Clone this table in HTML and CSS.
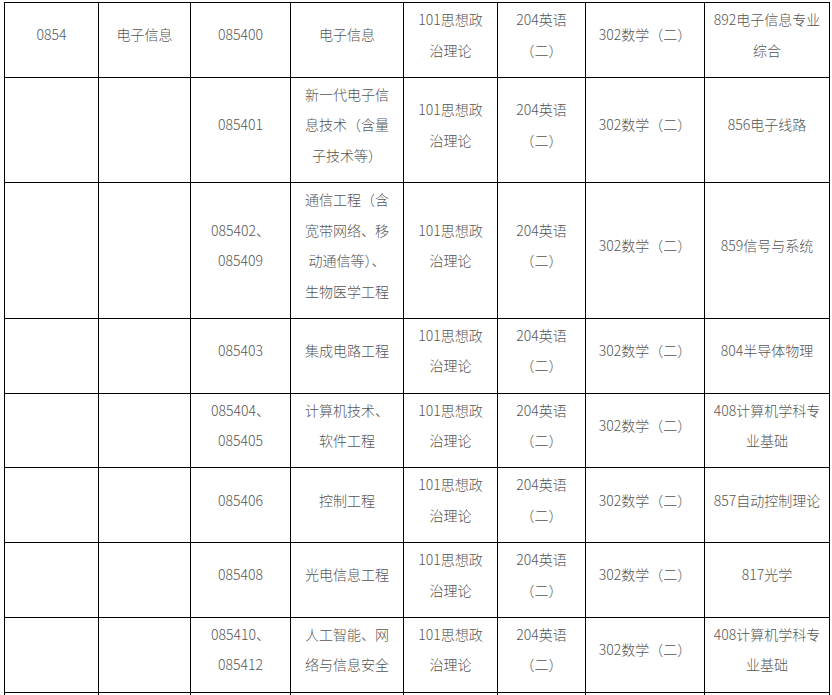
FILE: index.html
```html
<!DOCTYPE html>
<html lang="zh-CN">
<head>
<meta charset="utf-8">
<title>电子信息</title>
<link rel="stylesheet" href="styles.css">
</head>
<body>
<table class="grid">
  <colgroup>
    <col class="c1"><col class="c2"><col class="c3"><col class="c4"><col class="c5"><col class="c6"><col class="c7"><col class="c8">
  </colgroup>
  <tbody>
    <tr>
      <td>0854</td><td>电子信息</td><td>085400</td><td>电子信息</td>
      <td>101思想政<br>治理论</td><td>204英语<br>（二）</td><td>302数学（二）</td><td>892电子信息专业<br>综合</td>
    </tr>
    <tr>
      <td></td><td></td><td>085401</td><td>新一代电子信<br>息技术（含量<br>子技术等）</td>
      <td>101思想政<br>治理论</td><td>204英语<br>（二）</td><td>302数学（二）</td><td>856电子线路</td>
    </tr>
    <tr>
      <td></td><td></td><td>085402、<br>085409</td><td>通信工程（含<br>宽带网络、移<br>动通信等）、<br>生物医学工程</td>
      <td>101思想政<br>治理论</td><td>204英语<br>（二）</td><td>302数学（二）</td><td>859信号与系统</td>
    </tr>
    <tr>
      <td></td><td></td><td>085403</td><td>集成电路工程</td>
      <td>101思想政<br>治理论</td><td>204英语<br>（二）</td><td>302数学（二）</td><td>804半导体物理</td>
    </tr>
    <tr>
      <td></td><td></td><td>085404、<br>085405</td><td>计算机技术、<br>软件工程</td>
      <td>101思想政<br>治理论</td><td>204英语<br>（二）</td><td>302数学（二）</td><td>408计算机学科专<br>业基础</td>
    </tr>
    <tr>
      <td></td><td></td><td>085406</td><td>控制工程</td>
      <td>101思想政<br>治理论</td><td>204英语<br>（二）</td><td>302数学（二）</td><td>857自动控制理论</td>
    </tr>
    <tr>
      <td></td><td></td><td>085408</td><td>光电信息工程</td>
      <td>101思想政<br>治理论</td><td>204英语<br>（二）</td><td>302数学（二）</td><td>817光学</td>
    </tr>
    <tr>
      <td></td><td></td><td>085410、<br>085412</td><td>人工智能、网<br>络与信息安全</td>
      <td>101思想政<br>治理论</td><td>204英语<br>（二）</td><td>302数学（二）</td><td>408计算机学科专<br>业基础</td>
    </tr>
    <tr class="tail">
      <td></td><td></td><td></td><td></td><td></td><td></td><td></td><td></td>
    </tr>
  </tbody>
</table>
</body>
</html>
```
FILE: styles.css
```css
html, body {
  margin: 0;
  padding: 0;
  background: #ffffff;
  overflow: hidden;
}
body {
  padding: 2px 0 0 4px;
  font-family: "Noto Sans CJK SC", "Liberation Sans", sans-serif;
  font-size: 14px;
  color: #555555;
}
.grid {
  border-collapse: collapse;
  table-layout: fixed;
  width: 825px;
}
.c1 { width: 94px; }
.c2 { width: 92px; }
.c3 { width: 100px; }
.c4 { width: 113px; }
.c5 { width: 94px; }
.c6 { width: 88px; }
.c7 { width: 119px; }
.c8 { width: 125px; }
.grid td {
  border: 1px solid #000000;
  padding: 1px 0 11.75px;
  line-height: 30.5px;
  text-align: center;
  vertical-align: middle;
  white-space: nowrap;
  font-weight: 300;
}
.tail td {
  height: 40px;
}
```
